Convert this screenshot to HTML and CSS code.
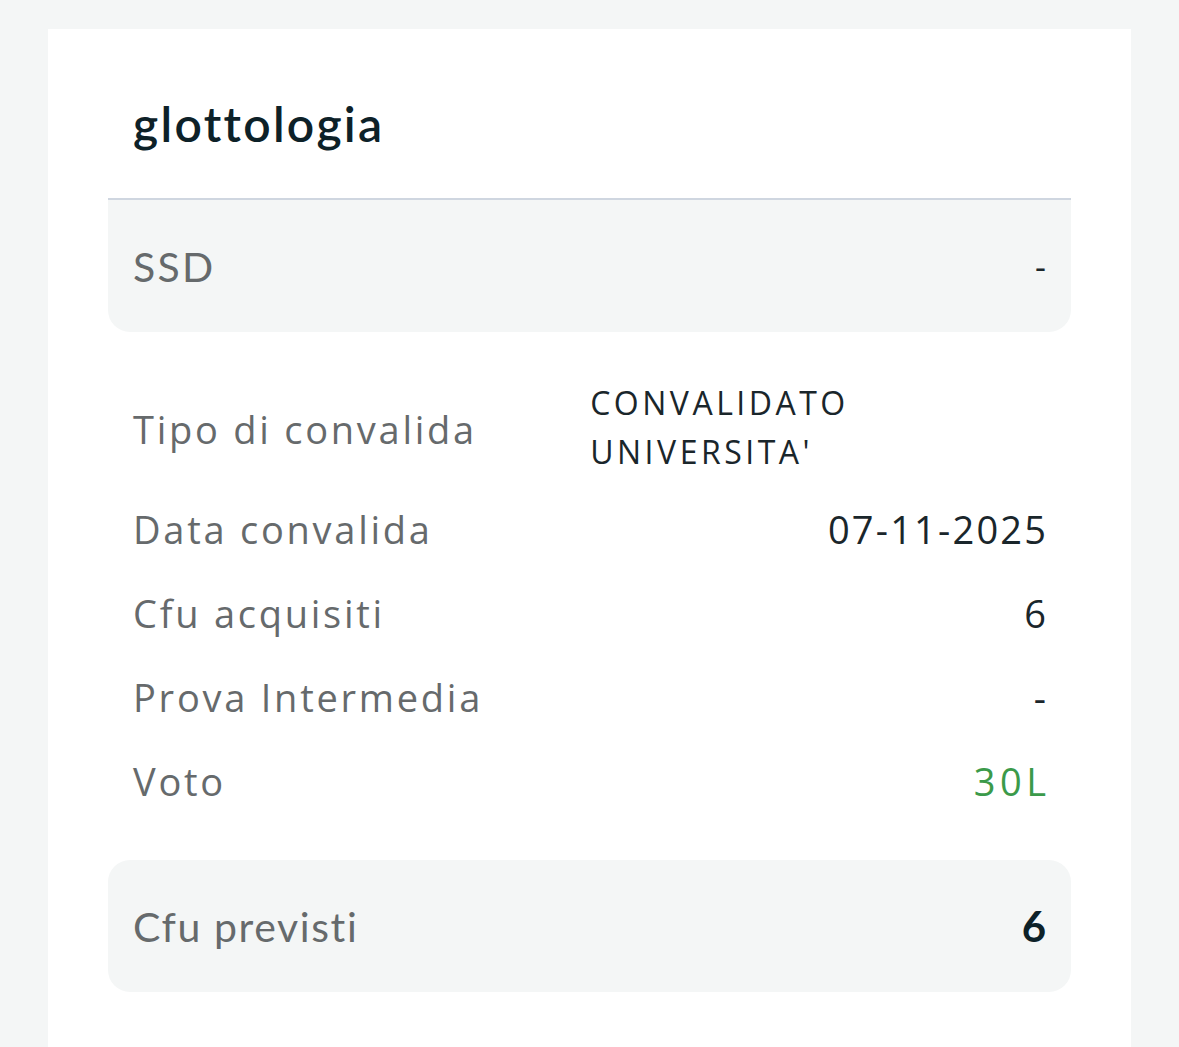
FILE: index.html
```html
<!DOCTYPE html>
<html lang="it">
<head>
    <meta charset="UTF-8">
    <title>glottologia</title>
    <link rel="stylesheet" href="styles.css">
</head>
<body>
    <!-- Scheda esame -->
    <div class="card">
        <h1 class="title">glottologia</h1>

        <div class="box box-top">
            <span class="box-label">SSD</span>
            <span class="box-value">-</span>
        </div>

        <!-- Dettagli convalida -->
        <div class="details">
            <div class="row">
                <span class="label">Tipo di convalida</span>
                <span class="value value-multi">CONVALIDATO<br>UNIVERSITA'</span>
            </div>
            <div class="row">
                <span class="label">Data convalida</span>
                <span class="value">07-11-2025</span>
            </div>
            <div class="row">
                <span class="label">Cfu acquisiti</span>
                <span class="value">6</span>
            </div>
            <div class="row">
                <span class="label">Prova Intermedia</span>
                <span class="value">-</span>
            </div>
            <div class="row">
                <span class="label">Voto</span>
                <span class="value value-green">30L</span>
            </div>
        </div>

        <div class="box">
            <span class="box-label box-label-wide">Cfu previsti</span>
            <span class="box-value box-strong">6</span>
        </div>
    </div>
</body>
</html>
```
FILE: styles.css
```css
/* Fond de page */
body {
    margin: 0;
    padding: 29px 48px 0;
    background: #f4f6f6;
    font-family: 'Open Sans', sans-serif;
    height: 100vh;
    box-sizing: border-box;
    overflow: hidden;
    display: flex;
    flex-direction: column;
}

/* Carte blanche */
.card {
    flex: 1;
    background: #ffffff;
    padding: 0 60px;
}

.title {
    margin: 0;
    padding: 68px 0 47px 25px;
    font-family: 'Lato', sans-serif;
    font-weight: 600;
    font-size: 48px;
    letter-spacing: 2.3px;
    line-height: 54px;
    color: #0d2128;
    border-bottom: 2px solid #cfd6e0;
}

/* Encadrés gris */
.box {
    background: #f4f6f6;
    border-radius: 22px;
    height: 132px;
    padding: 0 25px;
    display: flex;
    justify-content: space-between;
    align-items: center;
}

.box-top {
    border-top-left-radius: 0;
    border-top-right-radius: 0;
}

.box-label {
    font-family: 'Lato', sans-serif;
    font-size: 41px;
    letter-spacing: 2.3px;
    color: #666a6c;
}

.box-label-wide {
    letter-spacing: 1.6px;
}

.box-value {
    font-size: 34px;
    color: #1a262b;
}

.box-strong {
    font-family: 'Lato', sans-serif;
    font-weight: 700;
    font-size: 42px;
    color: #0d2128;
}

/* Lignes de détail */
.details {
    padding: 39px 25px 37px;
    display: flex;
    flex-direction: column;
}

.row {
    display: flex;
    justify-content: space-between;
    align-items: center;
    min-height: 84px;
}

.label {
    font-size: 38px;
    letter-spacing: 2.75px;
    color: #666a6c;
}

.value {
    font-size: 38px;
    letter-spacing: 2.2px;
    margin-right: -2.2px;
    color: #1a262b;
}

.value-multi {
    width: 458px;
    font-size: 32px;
    letter-spacing: 3.5px;
    line-height: 49px;
    padding: 7px 0 11px;
}

.value-green {
    letter-spacing: 4.5px;
    margin-right: -4.5px;
    color: #3b9a4a;
}
```
